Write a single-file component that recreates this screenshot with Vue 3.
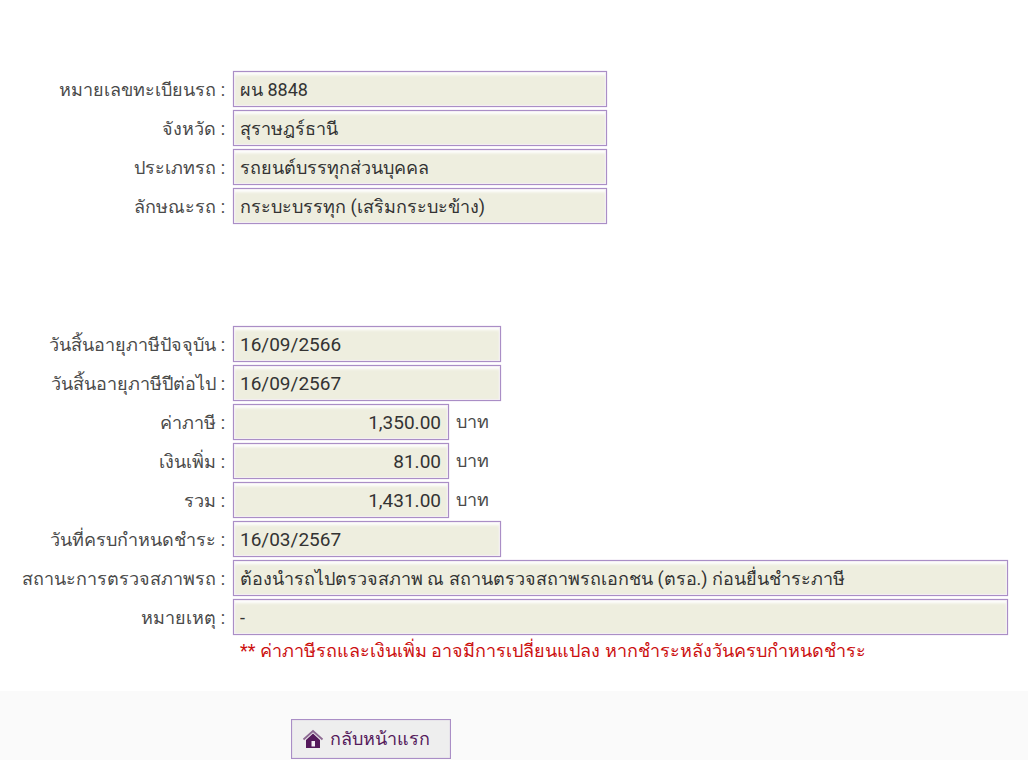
<script setup>
const vehicle = [
  { id: 'plate', label: 'หมายเลขทะเบียนรถ :', value: 'ผน 8848', size: 'medium' },
  { id: 'province', label: 'จังหวัด :', value: 'สุราษฎร์ธานี', size: 'medium' },
  { id: 'type', label: 'ประเภทรถ :', value: 'รถยนต์บรรทุกส่วนบุคคล', size: 'medium' },
  { id: 'body', label: 'ลักษณะรถ :', value: 'กระบะบรรทุก (เสริมกระบะข้าง)', size: 'medium' },
]
const tax = [
  { id: 'expiry', label: 'วันสิ้นอายุภาษีปัจจุบัน :', value: '16/09/2566', size: 'date' },
  { id: 'next', label: 'วันสิ้นอายุภาษีปีต่อไป :', value: '16/09/2567', size: 'date' },
  { id: 'tax', label: 'ค่าภาษี :', value: '1,350.00', size: 'amount', unit: 'บาท' },
  { id: 'extra', label: 'เงินเพิ่ม :', value: '81.00', size: 'amount', unit: 'บาท' },
  { id: 'total', label: 'รวม :', value: '1,431.00', size: 'amount', unit: 'บาท' },
  { id: 'due', label: 'วันที่ครบกำหนดชำระ :', value: '16/03/2567', size: 'date' },
  { id: 'inspect', label: 'สถานะการตรวจสภาพรถ :', value: 'ต้องนำรถไปตรวจสภาพ ณ สถานตรวจสถาพรถเอกชน (ตรอ.) ก่อนยื่นชำระภาษี', size: 'wide' },
  { id: 'remark', label: 'หมายเหตุ :', value: '-', size: 'wide' },
]
</script>

<template>
  <main class="page">
    <form class="form" @submit.prevent>
      <section v-for="(group, i) in [vehicle, tax]" :key="i" class="group">
        <div v-for="f in group" :key="f.id" class="row">
          <label class="label" :for="f.id">{{ f.label }}</label>
          <input :id="f.id" class="field" :class="f.size" type="text" :value="f.value" readonly />
          <span v-if="f.unit" class="unit">{{ f.unit }}</span>
        </div>
        <p v-if="i === 1" class="note">** ค่าภาษีรถและเงินเพิ่ม อาจมีการเปลี่ยนแปลง หากชำระหลังวันครบกำหนดชำระ</p>
      </section>
    </form>
    <footer class="footer">
      <button type="button" class="home">
        <svg width="22" height="20" viewBox="0 0 22 20" aria-hidden="true">
          <path d="M1.5 10.5 11 2l9.500 8.500" fill="none" stroke="#8d6992" stroke-width="1.800" />
          <path d="M11 4.500 18 11v8H4v-8Z" fill="#551a5b" />
          <path d="M9.500 12h3.500v5.500H9.500z" fill="#f4eef5" />
        </svg>
        <span>กลับหน้าแรก</span>
      </button>
    </footer>
  </main>
</template>

<style scoped>
.page { min-height: 100vh; display: flex; flex-direction: column; font: 18px/24px Roboto, "Noto Sans", sans-serif; color: #4a4a4a; }
.form { padding: 71px 20px 28px 0; }
.group + .group { margin-top: 102px; }
.row { display: flex; align-items: center; margin-bottom: 3px; }
.label { width: 225px; flex: none; box-sizing: border-box; padding-top: 2px; text-align: right; white-space: nowrap; margin-right: 8px; }
.field { box-sizing: border-box; height: 36px; min-width: 0; border: 1px solid #aa8ec6; padding: 0 7px 0 6px; background: #eeeedf; box-shadow: 0 0 1px #c9b4dc, inset 0 0 1px 1px #f3eef3, inset 0 3px 3px #fff; font: inherit; color: #333; border-radius: 0; outline: 0; }
.medium { width: 374px; }
.date { width: 268px; font-size: 19px; }
.amount { width: 216px; text-align: right; font-size: 19px; }
.wide { flex: 1; }
.unit { margin-left: 7px; }
.note { margin: 4px 0 0 240px; color: #cc1010; }
.footer { flex: 1; background: #fafafa; padding: 28px 0 0 291px; }
.home { height: 40px; width: 160px; display: flex; align-items: center; gap: 6px; padding: 0 10px; border: 1px solid #aa8ec6; box-shadow: inset 0 0 1px #aa8ec6; background: #eee; font: inherit; color: #551a5b; }
</style>

<style>
body { margin: 0; background: #fff; }
</style>
